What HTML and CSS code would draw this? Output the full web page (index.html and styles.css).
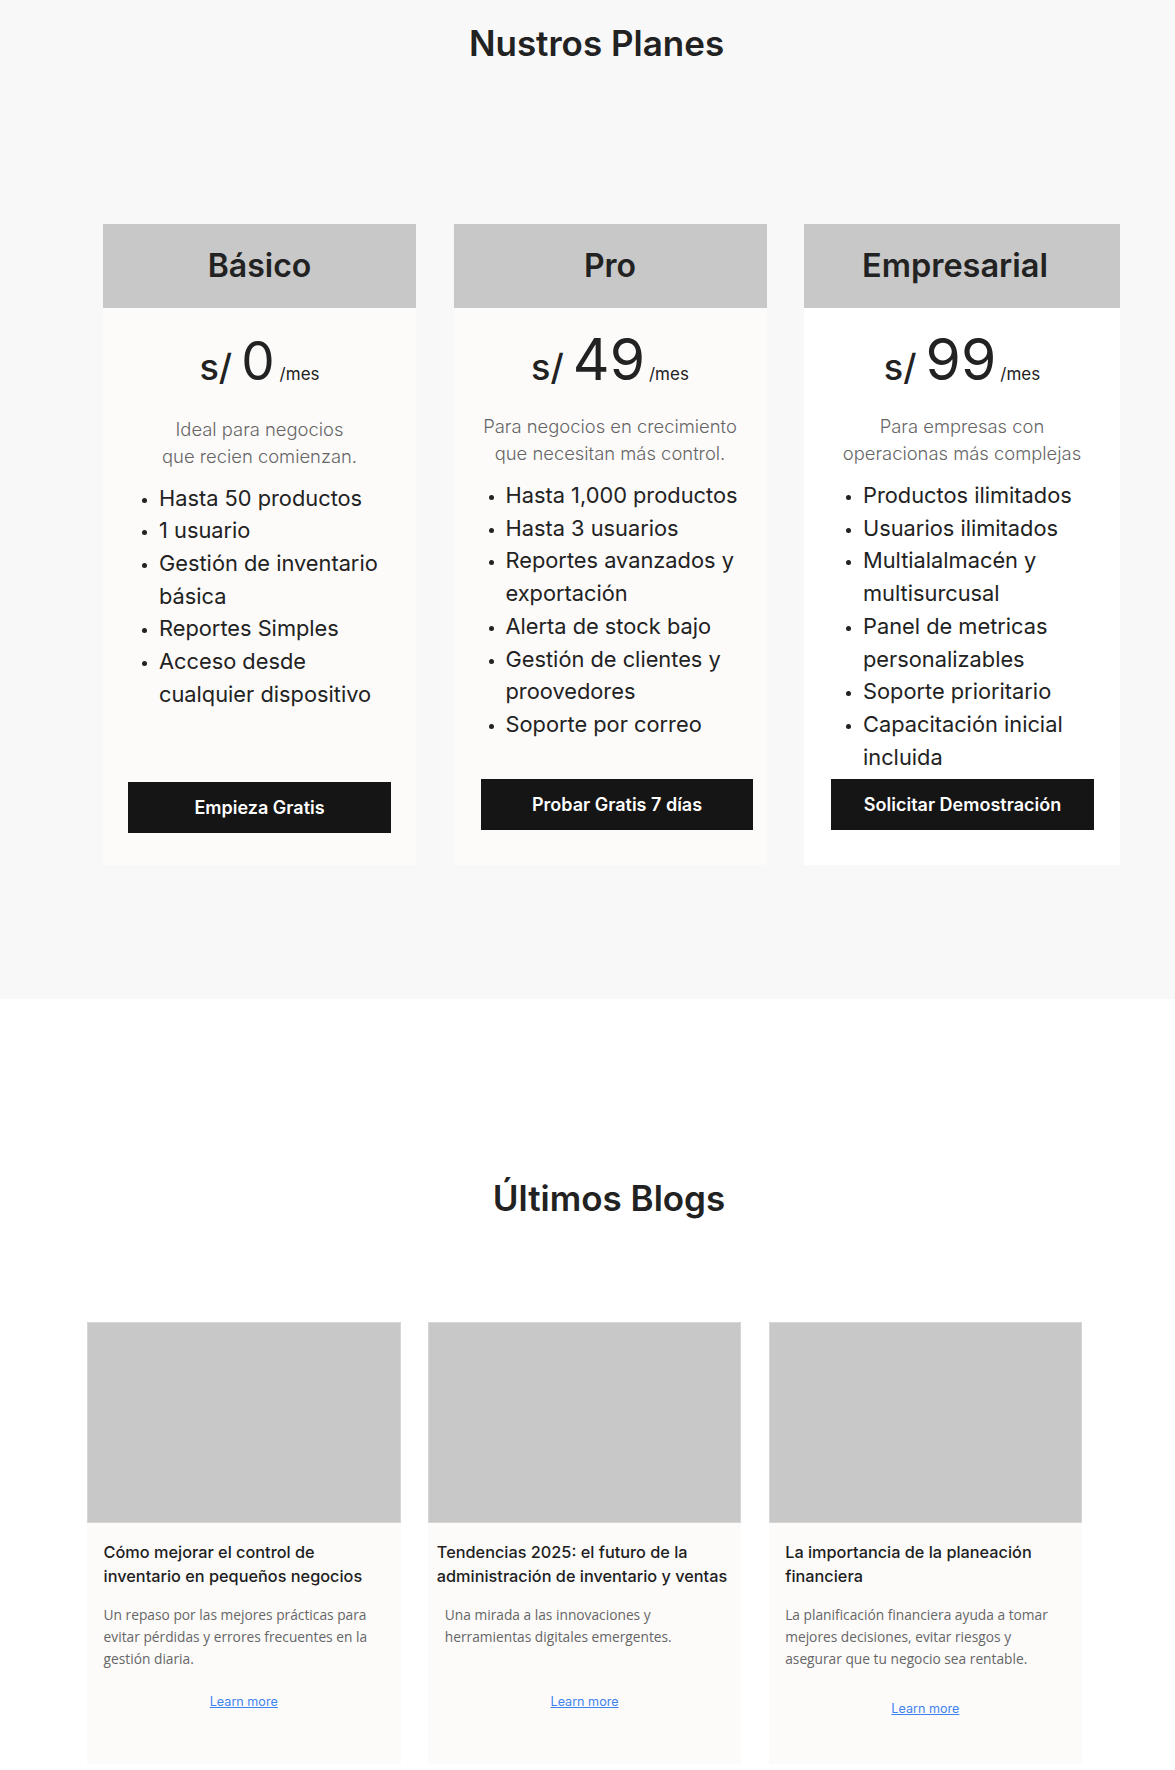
FILE: index.html
```html
<!DOCTYPE html>
<html lang="es">
<head>
<meta charset="utf-8">
<title>Planes y Blogs</title>
<link rel="stylesheet" href="styles.css">
</head>
<body>
<section class="pricing">
  <h2 class="pricing-title">Nustros Planes</h2>
  <div class="plans">
    <article class="plan plan--basic">
      <header class="plan-head"><h3>Básico</h3></header>
      <div class="plan-body">
        <div class="price"><span class="cur">s/</span><span class="amt amt--small">0</span><span class="per">/mes</span></div>
        <p class="plan-desc">Ideal para negocios<br>que recien comienzan.</p>
        <ul class="features">
          <li>Hasta 50 productos</li>
          <li>1 usuario</li>
          <li>Gestión de inventario básica</li>
          <li>Reportes Simples</li>
          <li>Acceso desde cualquier dispositivo</li>
        </ul>
        <a class="plan-btn" href="#">Empieza Gratis</a>
      </div>
    </article>
    <article class="plan plan--pro">
      <header class="plan-head"><h3>Pro</h3></header>
      <div class="plan-body">
        <div class="price"><span class="cur">s/</span><span class="amt">49</span><span class="per">/mes</span></div>
        <p class="plan-desc">Para negocios en crecimiento<br>que necesitan más control.</p>
        <ul class="features">
          <li>Hasta 1,000 productos</li>
          <li>Hasta 3 usuarios</li>
          <li>Reportes avanzados y exportación</li>
          <li>Alerta de stock bajo</li>
          <li>Gestión de clientes y proovedores</li>
          <li>Soporte por correo</li>
        </ul>
        <a class="plan-btn" href="#">Probar Gratis 7 días</a>
      </div>
    </article>
    <article class="plan plan--enterprise">
      <header class="plan-head"><h3>Empresarial</h3></header>
      <div class="plan-body">
        <div class="price"><span class="cur">s/</span><span class="amt">99</span><span class="per">/mes</span></div>
        <p class="plan-desc">Para empresas con<br>operacionas más complejas</p>
        <ul class="features">
          <li>Productos ilimitados</li>
          <li>Usuarios ilimitados</li>
          <li>Multialalmacén y multisurcusal</li>
          <li>Panel de metricas personalizables</li>
          <li>Soporte prioritario</li>
          <li>Capacitación inicial incluida</li>
        </ul>
        <a class="plan-btn" href="#">Solicitar Demostración</a>
      </div>
    </article>
  </div>
</section>

<section class="blog">
  <h2 class="blog-title">Últimos Blogs</h2>
  <div class="posts">
    <article class="post">
      <div class="post-img"></div>
      <div class="post-body">
        <h3 class="post-title">Cómo mejorar el control de inventario en pequeños negocios</h3>
        <p class="post-desc">Un repaso por las mejores prácticas para evitar pérdidas y errores frecuentes en la gestión diaria.</p>
        <a class="post-link" href="#">Learn more</a>
      </div>
    </article>
    <article class="post post--wide-title">
      <div class="post-img"></div>
      <div class="post-body">
        <h3 class="post-title">Tendencias 2025: el futuro de la administración de inventario y ventas</h3>
        <p class="post-desc">Una mirada a las innovaciones y herramientas digitales emergentes.</p>
        <a class="post-link" href="#">Learn more</a>
      </div>
    </article>
    <article class="post post--low-link">
      <div class="post-img"></div>
      <div class="post-body">
        <h3 class="post-title">La importancia de la planeación financiera</h3>
        <p class="post-desc">La planificación financiera ayuda a tomar mejores decisiones, evitar riesgos y asegurar que tu negocio sea rentable.</p>
        <a class="post-link" href="#">Learn more</a>
      </div>
    </article>
  </div>
</section>
</body>
</html>
```
FILE: styles.css
```css
* { box-sizing: border-box; }

body {
  margin: 0;
  font-family: "Inter", "Open Sans", sans-serif;
  color: #222;
  background: #fff;
}

/* ---------- Pricing ---------- */
.pricing {
  background: #f8f8f8;
  padding: 22px 0 134px;
}

.pricing-title {
  margin: 0;
  padding-left: 18px;
  text-align: center;
  font-size: 35px;
  font-weight: 600;
  line-height: 42px;
  color: #222;
}

.plans {
  margin-top: 159.5px;
  padding-left: 103px;
  display: grid;
  grid-template-columns: 313px 313px 316px;
  column-gap: 37.5px;
}

.plan {
  display: flex;
  flex-direction: column;
  background: #fcfbfa;
}

.plan--enterprise { background: #ffffff; }

.plan-head {
  height: 84.5px;
  background: #c8c8c8;
  display: flex;
  align-items: center;
  justify-content: center;
}

.plan--enterprise .plan-head { padding-right: 14px; }

.plan-head h3 {
  margin: 0;
  font-size: 32px;
  font-weight: 600;
  line-height: 1.2;
  color: #222;
}

.plan--enterprise .plan-head h3 { font-size: 32.5px; }

.plan-body {
  flex: 1;
  display: flex;
  flex-direction: column;
  padding: 22.3px 0 34.6px;
}

.price {
  height: 60px;
  font-size: 57px;
  line-height: 60px;
  text-align: center;
  white-space: nowrap;
  color: #222;
}

.cur {
  font-size: 36px;
  font-weight: 500;
  line-height: 1;
  margin-right: 9px;
}

.amt {
  font-size: 57px;
  font-weight: 400;
  line-height: 1;
  margin-right: 4px;
}

.amt--small { font-size: 53px; margin-right: 5px; }

.per {
  font-size: 17px;
  font-weight: 400;
  line-height: 1;
}

.plan-desc {
  margin: 23.2px 0 0;
  text-align: center;
  font-size: 18.4px;
  font-weight: 300;
  line-height: 27px;
  color: #666;
}

.features {
  margin: 11.5px 0 5.7px;
  font-size: 21.8px;
  line-height: 32.7px;
  color: #222;
}

.features li::marker { font-size: 15px; }

.plan--basic .plan-desc { margin-top: 25.8px; }
.plan--basic .plan-body { padding-bottom: 31.6px; }
.plan--basic .features { padding: 0 30px 0 56px; }
.plan--pro .features { padding: 0 18px 0 52px; }
.plan--enterprise .features { padding: 0 18px 0 59px; }

.plan-btn {
  margin-top: auto;
  height: 51px;
  display: flex;
  align-items: center;
  justify-content: center;
  background: #151515;
  color: #fff;
  text-decoration: none;
  font-size: 18px;
  font-weight: 600;
}

.plan--basic .plan-btn { margin-left: 25px; margin-right: 25px; }
.plan--pro .plan-btn { margin-left: 27.6px; margin-right: 13.5px; }
.plan--enterprise .plan-btn { margin-left: 27px; margin-right: 26px; }

/* ---------- Blog ---------- */
.blog {
  background: #fff;
  padding-top: 178.3px;
  padding-bottom: 7px;
}

.blog-title {
  margin: 0;
  padding-left: 43px;
  text-align: center;
  font-size: 35px;
  font-weight: 600;
  line-height: 42px;
  color: #222;
}

.posts {
  margin-top: 102.7px;
  padding-left: 87px;
  display: grid;
  grid-template-columns: repeat(3, 313.5px);
  column-gap: 27.3px;
}

.post {
  height: 442px;
  display: flex;
  flex-direction: column;
  background: #fcfbfa;
}

.post-img {
  height: 201px;
  background: #c8c8c8;
  border: 1px solid #d6d6d6;
}

.post-body {
  flex: 1;
  display: flex;
  flex-direction: column;
  padding: 17px 0 51.6px;
}

.post-title {
  margin: 0;
  padding: 0 16px 0 16.6px;
  font-size: 16.3px;
  font-weight: 500;
  line-height: 24px;
  color: #1e1e1e;
}

.post--wide-title .post-title { padding: 0 0 0 9px; }

.post-desc {
  margin: 16.6px 0 0;
  padding: 0 17px 0 16.6px;
  font-family: "Open Sans", sans-serif;
  font-size: 13.75px;
  line-height: 22px;
  color: #666;
}

.post--wide-title .post-desc { padding-left: 17px; }

.post-link {
  margin-top: auto;
  text-align: center;
  font-size: 12.6px;
  line-height: 20px;
  color: #3f83f0;
  text-decoration: underline;
}

.post--low-link .post-body { padding-bottom: 44.6px; }
```
